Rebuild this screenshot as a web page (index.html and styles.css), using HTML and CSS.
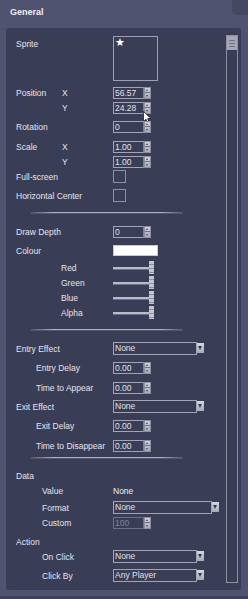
FILE: index.html
```html
<!DOCTYPE html>
<html lang="en">
<head>
    <meta charset="UTF-8">
    <title>General</title>
    <link rel="stylesheet" href="styles.css">
</head>
<body>
<div class="window">
    <div class="header">
        <span class="title">General</span>
        <span class="corner"></span>
    </div>

    <div class="panel">
        <div class="content">

            <!-- sprite -->
            <div class="row sprite-row">
                <span class="label">Sprite</span>
                <div class="sprite-box"><span class="star">&#9733;</span></div>
            </div>

            <!-- transform -->
            <div class="row pos">
                <span class="label short">Position</span><span class="axis">X</span>
                <div class="spin"><span class="field">56.57</span><span class="spin-btn"></span></div>
            </div>
            <div class="row sub">
                <span class="label short"></span><span class="axis">Y</span>
                <div class="spin cursor-host"><span class="field">24.28</span><span class="spin-btn"></span>
                    <svg class="cursor" width="9" height="13" viewBox="0 0 9 13"><path d="M0.5 0.5 L0.5 10.5 L3 8.2 L4.8 12.3 L6.3 11.6 L4.6 7.6 L8 7.6 Z" fill="#fff" stroke="#222" stroke-width="0.8"/></svg>
                </div>
            </div>
            <div class="row">
                <span class="label">Rotation</span>
                <div class="spin"><span class="field">0</span><span class="spin-btn"></span></div>
            </div>
            <div class="row wide">
                <span class="label short">Scale</span><span class="axis">X</span>
                <div class="spin"><span class="field">1.00</span><span class="spin-btn"></span></div>
            </div>
            <div class="row sub">
                <span class="label short"></span><span class="axis">Y</span>
                <div class="spin"><span class="field">1.00</span><span class="spin-btn"></span></div>
            </div>
            <div class="row sub">
                <span class="label">Full-screen</span>
                <span class="check"></span>
            </div>
            <div class="row">
                <span class="label">Horizontal Center</span>
                <span class="check"></span>
            </div>

            <div class="sep"></div>

            <!-- draw -->
            <div class="row first">
                <span class="label">Draw Depth</span>
                <div class="spin"><span class="field">0</span><span class="spin-btn"></span></div>
            </div>
            <div class="row">
                <span class="label">Colour</span>
                <span class="swatch"></span>
            </div>
            <div class="row mid">
                <span class="label ind3">Red</span>
                <div class="slider"><span class="track"></span><span class="thumb"></span></div>
            </div>
            <div class="row sub">
                <span class="label ind3">Green</span>
                <div class="slider"><span class="track"></span><span class="thumb"></span></div>
            </div>
            <div class="row sub">
                <span class="label ind3">Blue</span>
                <div class="slider"><span class="track"></span><span class="thumb"></span></div>
            </div>
            <div class="row sub">
                <span class="label ind3">Alpha</span>
                <div class="slider"><span class="track"></span><span class="thumb"></span></div>
            </div>

            <div class="sep"></div>

            <!-- effects -->
            <div class="row first">
                <span class="label">Entry Effect</span>
                <div class="select"><span class="field">None</span><span class="drop-btn"></span></div>
            </div>
            <div class="row">
                <span class="label ind1">Entry Delay</span>
                <div class="spin"><span class="field">0.00</span><span class="spin-btn"></span></div>
            </div>
            <div class="row wide">
                <span class="label ind1">Time to Appear</span>
                <div class="spin"><span class="field">0.00</span><span class="spin-btn"></span></div>
            </div>
            <div class="row">
                <span class="label">Exit Effect</span>
                <div class="select"><span class="field">None</span><span class="drop-btn"></span></div>
            </div>
            <div class="row">
                <span class="label ind1">Exit Delay</span>
                <div class="spin"><span class="field">0.00</span><span class="spin-btn"></span></div>
            </div>
            <div class="row wide">
                <span class="label ind1">Time to Disappear</span>
                <div class="spin"><span class="field">0.00</span><span class="spin-btn"></span></div>
            </div>

            <div class="sep sep-last"></div>

            <!-- data / action -->
            <div class="row first">
                <span class="label">Data</span>
            </div>
            <div class="row sub">
                <span class="label ind2">Value</span>
                <span class="value">None</span>
            </div>
            <div class="row mid">
                <span class="label ind2">Format</span>
                <div class="select long"><span class="field">None</span><span class="drop-btn"></span></div>
            </div>
            <div class="row sub">
                <span class="label ind2">Custom</span>
                <div class="spin disabled"><span class="field">100</span><span class="spin-btn"></span></div>
            </div>
            <div class="row">
                <span class="label">Action</span>
            </div>
            <div class="row sub">
                <span class="label ind2">On Click</span>
                <div class="select"><span class="field">None</span><span class="drop-btn"></span></div>
            </div>
            <div class="row">
                <span class="label ind2">Click By</span>
                <div class="select"><span class="field">Any Player</span><span class="drop-btn"></span></div>
            </div>
        </div>

        <div class="scrollbar"><div class="scroll-thumb"></div></div>
    </div>
</div>
</body>
</html>
```

FILE: styles.css
```css
body {
    margin: 0;
    background-color: #4f5370;
    font-family: "Liberation Sans", Arial, sans-serif;
    font-size: 8.5px;
    color: #e4e4ec;
}
.window {
    width: 248px;
    height: 599px;
    display: flex;
    flex-direction: column;
    background: #4f5370;
    border-bottom: 3px solid #3e415a;
    box-sizing: border-box;
}
.header {
    display: flex;
    height: 28px;
    flex-shrink: 0;
}
.title {
    font-weight: bold;
    font-size: 9px;
    padding: 7px 0 0 10px;
    color: #eeeef4;
}
.corner {
    margin-left: auto;
    width: 16px;
    height: 15px;
    background: #46485f;
    border-bottom-left-radius: 5px;
}
.panel {
    display: flex;
    height: 562px;
    margin: 0 7px 0 6px;
    background: #3a3d56;
    border-radius: 3px;
}
.content {
    flex: 1;
    padding: 8px 0 0 10px;
}

/* rows */
.row {
    display: flex;
    align-items: center;
    height: 13px;
    margin-top: 6px;
}
.row.sub { margin-top: 2px; }
.row.mid { margin-top: 4px; }
.row.wide { margin-top: 7px; }
.row.first { margin-top: 12px; }
.row.pos { margin-top: 5px; }
.sprite-row {
    height: 45px;
    align-items: flex-start;
    margin-top: 0;
}
.sprite-row .label {
    padding-top: 3px;
}
.label {
    flex: 0 0 97px;
    box-sizing: border-box;
    white-space: nowrap;
}
.label.short { flex-basis: 46px; }
.axis { flex: 0 0 51px; }
.label.ind1 { padding-left: 20px; }
.label.ind2 { padding-left: 26px; }
.label.ind3 { padding-left: 45px; }

/* sprite */
.sprite-box {
    width: 45px;
    height: 45px;
    box-sizing: border-box;
    border: 1px solid #9fa1b2;
    position: relative;
}
.star {
    position: absolute;
    left: 1px;
    top: 0;
    font-family: "DejaVu Sans", sans-serif;
    font-size: 11px;
    line-height: 12px;
    color: #fff;
}

/* spinner */
.spin {
    display: flex;
    height: 12px;
    position: relative;
}
.field {
    display: block;
    height: 12px;
    line-height: 11px;
    box-sizing: border-box;
    border: 1px solid #a2a4b4;
    border-right-color: #7c7f95;
    padding-left: 1px;
    color: #e0e0e8;
    font-size: 8.5px;
}
.spin .field { width: 31px; }
.spin-btn {
    width: 7px;
    height: 12px;
    box-sizing: border-box;
    border: 1px solid #8d8fa0;
    background:
        linear-gradient(#6e7083, #6e7083) center / 100% 1px no-repeat,
        linear-gradient(#d2d3da, #a9abb8);
    position: relative;
}
.spin-btn::before,
.spin-btn::after {
    content: "";
    position: absolute;
    left: 1px;
    border-left: 1.5px solid transparent;
    border-right: 1.5px solid transparent;
}
.spin-btn::before {
    top: 1px;
    border-bottom: 2px solid #4a4c5e;
}
.spin-btn::after {
    bottom: 1px;
    border-top: 2px solid #4a4c5e;
}
.spin.disabled .field {
    color: #7f8296;
    border-color: #6e7185;
}
.cursor {
    position: absolute;
    left: 30px;
    top: 9px;
}

/* checkbox */
.check {
    width: 13px;
    height: 13px;
    box-sizing: border-box;
    border: 1px solid #8e90a3;
}

/* colour */
.swatch {
    width: 45px;
    height: 11px;
    box-sizing: border-box;
    background: #fff;
    border: 1px solid #c8c9d2;
}
.slider {
    position: relative;
    width: 42px;
    height: 13px;
}
.track {
    position: absolute;
    left: 0;
    top: 6px;
    width: 38px;
    height: 2px;
    background: #b9bbc6;
    border-bottom: 1px solid #6e7185;
}
.thumb {
    position: absolute;
    left: 36px;
    top: 0;
    width: 5px;
    height: 13px;
    background: repeating-linear-gradient(#c5c6cf 0 3px, #8d8fa1 3px 4px);
}

/* select */
.select {
    display: flex;
    height: 13px;
}
.select .field {
    width: 84px;
    height: 13px;
    line-height: 11px;
    border-right-color: #a2a4b4;
    font-size: 8.5px;
}
.select.long .field { width: 99px; }
.drop-btn {
    width: 7px;
    height: 10px;
    margin-top: 1px;
    background: linear-gradient(#d6d7de, #a7a9b6);
    position: relative;
}
.drop-btn::after {
    content: "";
    position: absolute;
    left: 1px;
    top: 3px;
    border-left: 2.5px solid transparent;
    border-right: 2.5px solid transparent;
    border-top: 4px solid #3b3d4e;
}
.value {
    color: #eeeef4;
}

/* separators */
.sep {
    width: 152px;
    height: 1px;
    margin: 10px 0 0 15px;
    background: linear-gradient(to right, rgba(170,172,188,0.2), #b0b2c2 15%, #b0b2c2 85%, rgba(170,172,188,0.2));
    box-shadow: 0 1px 0 rgba(120,122,140,0.4);
}
.sep-last {
    margin-top: 5px;
}
.sep + .row.first { margin-top: 12px; }
.sep-last + .row.first { margin-top: 11px; }

/* scrollbar */
.scrollbar {
    width: 12px;
    margin: 7px 3px 7px 0;
    box-sizing: border-box;
    border: 1px solid #8f91a3;
    padding: 0;
}
.scroll-thumb {
    height: 14px;
    background:
        linear-gradient(#6f7285, #6f7285) 2px 4px / 6px 1px no-repeat,
        linear-gradient(#6f7285, #6f7285) 2px 7px / 6px 1px no-repeat,
        linear-gradient(#6f7285, #6f7285) 2px 10px / 6px 1px no-repeat,
        #a5a7b6;
}
```
